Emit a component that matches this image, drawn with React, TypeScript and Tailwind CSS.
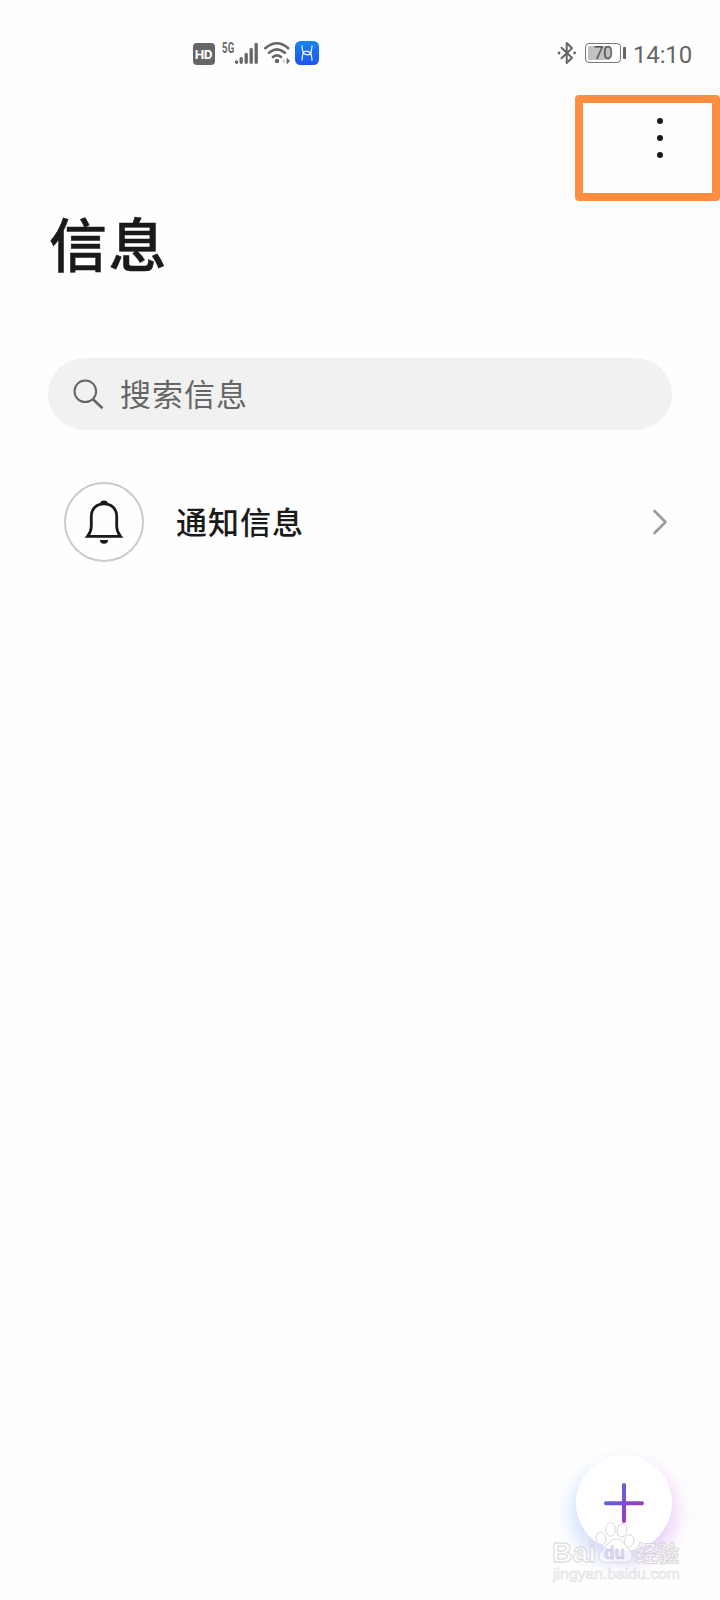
import React from 'react';

const StatusBar: React.FC = () => (
  <header className="h-[94px] flex justify-between pl-[192px] pr-7 pt-[40px] text-[#666]">
    <div className="flex h-[26px]">
      <div className="w-[22px] h-[22px] mt-[2.5px] ml-[0.5px] rounded-[4px] bg-[#666] text-white text-[13.5px] leading-[22px] tracking-[-0.3px] font-bold text-center font-['Roboto','Liberation_Sans',sans-serif]">
        HD
      </div>
      <span className="ml-[7.5px] w-[12.5px] text-[14px] leading-[16px] tracking-[0.5px] font-bold origin-left scale-x-[0.68] whitespace-nowrap font-['Roboto','Liberation_Sans',sans-serif]">
        5G
      </span>
      <svg className="w-[24px] h-[26px]" viewBox="0 0 24 26" stroke="currentColor" strokeWidth="3.3" strokeLinecap="round">
        <path d="M1.6 21.8v.5M6.2 18.7v3.6M11.2 14.5v7.8M16.2 9.5v12.8M21.2 4.3v18" />
      </svg>
      <svg className="ml-[4px] w-[29px] h-[26px]" viewBox="0 0 29 26" fill="none" stroke="currentColor" strokeWidth="2.6" strokeLinecap="round">
        <path d="M2.3 8.2Q14 -1.7 25.2 8.2M6 12.7Q14 6 21.8 12.7M10 17Q14 13.7 18 17" />
        <circle cx="14" cy="21" r="2.2" fill="currentColor" stroke="none" />
        <path d="M21.8 18.5v5L19 21z" fill="#ccc" stroke="none" />
        <path d="M23.6 17.5v7L27 21z" fill="currentColor" stroke="none" />
      </svg>
      <svg className="ml-[3px] mt-[1px] w-[24px] h-[24px]" viewBox="0 0 24 24" fill="none">
        <defs>
          <linearGradient id="app" x1="0" y1="0" x2="0" y2="1">
            <stop stopColor="#1687ef" />
            <stop offset="1" stopColor="#2051ee" />
          </linearGradient>
        </defs>
        <rect width="24" height="24" rx="5.5" fill="url(#app)" />
        <path
          d="M7 4.8C7 8.5 8 9.6 8 12S7 15.5 7 19.2M17 4.8c0 3.7-1 4.8-1 7.2s1 3.5 1 7.2M7.6 9.5c.5 5 7.5 5.6 8.6 2M16.4 14.5c-.6-5-7.6-5.4-8.6-2"
          stroke="#fff"
          strokeWidth="1.1"
          strokeLinecap="round"
        />
      </svg>
    </div>

    <div className="flex h-[26px]">
      <svg className="w-[20px] h-[26px]" viewBox="0 0 20 26" fill="none" stroke="currentColor" strokeWidth="2" strokeLinejoin="round" strokeLinecap="round">
        <path d="M4.5 7.8l10.5 10L9.7 23V3l5.3 5.2-10.5 10" />
        <circle cx="2" cy="13" r="1.4" fill="currentColor" stroke="none" />
        <circle cx="17.6" cy="13" r="1.4" fill="currentColor" stroke="none" />
      </svg>
      <div className="relative ml-[8px] mt-[3px] w-[36px] h-[20px] rounded-[4px] border border-[#777] p-[2px]">
        <div className="h-full w-[22px] rounded-[1px] bg-[#c2c2c2]" />
        <span className="absolute inset-0 text-center text-[17.5px] leading-[19px] tracking-[-0.5px] text-[#555] font-['Roboto','Liberation_Sans',sans-serif]">70</span>
      </div>
      <div className="ml-[2px] mt-[7px] w-[3px] h-[12px] rounded-[1px] bg-[#666]" />
      <span className="ml-[7px] pt-px text-[24px] leading-[28px] tracking-[-0.15px] font-['Roboto','Liberation_Sans',sans-serif]">14:10</span>
    </div>
  </header>
);

const Watermark: React.FC = () => (
  <svg className="absolute left-[545px] top-[1515px] w-[145px] h-[75px]" viewBox="0 0 145 75" fill="#fff" fillOpacity="0.6" stroke="#d6d4d6" strokeWidth="0.9">
    <text x="7" y="46.5" fontSize="28" fontWeight="bold" textLength="44" lengthAdjust="spacingAndGlyphs" fontFamily="Liberation Sans, sans-serif">Bai</text>
    <ellipse cx="56" cy="23.5" rx="4.8" ry="6.5" transform="rotate(-12 56 23.5)" />
    <ellipse cx="65.5" cy="14.5" rx="4.8" ry="6.8" />
    <ellipse cx="77" cy="15.5" rx="4.8" ry="6.8" transform="rotate(8 77 15.5)" />
    <ellipse cx="84" cy="26" rx="4.8" ry="6.3" transform="rotate(15 84 26)" />
    <path d="M71 24c6 0 8 5 12 9 8 7 3 14.5-3.5 14.5-3 0-5.5-.7-8.5-.7s-5.5.7-9.5.7C54.5 47.5 51 41 58 34c4-3.5 7-10 13-10z" />
    <text x="59" y="43.5" fontSize="19" fontWeight="bold" textLength="21" lengthAdjust="spacingAndGlyphs" fill="#cdc8e8" stroke="#bdb8dc" strokeWidth="0.4" fontFamily="Liberation Sans, sans-serif">du</text>
    <text x="90.5" y="46" fontSize="22" fontWeight="bold" textLength="43.5" fontFamily="Noto Sans CJK SC, sans-serif">经验</text>
    <text x="8" y="63.5" fontSize="15" textLength="127" lengthAdjust="spacingAndGlyphs" stroke="#e2e0e2" strokeWidth="0.7" fontFamily="Liberation Sans, sans-serif">jingyan.baidu.com</text>
  </svg>
);

export default function App() {
  return (
    <div className="relative w-[720px] h-[1600px] overflow-hidden bg-[#fefefe] text-[#1a1a1a] font-['Noto_Sans_CJK_SC',sans-serif]">
      <StatusBar />

      <div className="h-[103px] flex justify-end pr-[57px] pt-[24px]">
        <button className="w-[6px] h-[40px] flex flex-col gap-[11px]" aria-label="更多">
          <span className="size-[6px] shrink-0 rounded-full bg-[#1a1a1a]" />
          <span className="size-[6px] shrink-0 rounded-full bg-[#1a1a1a]" />
          <span className="size-[6px] shrink-0 rounded-full bg-[#1a1a1a]" />
        </button>
      </div>
      {/* highlight around the menu button */}
      <div className="absolute left-[575px] top-[95px] w-[145px] h-[105.5px] rounded-[4px] border-8 border-[#ff8d3d]" />

      <main className="px-12">
        <h1 className="h-[90px] pl-px text-[58px] leading-[90px] tracking-[1.5px] font-medium [-webkit-text-stroke:0.5px_#1a1a1a]">信息</h1>

        <div className="mt-[71px] h-[72px] rounded-full bg-[#f1f1f1] flex items-center pl-6 text-[#666]">
          <svg className="w-[32px] h-[32px]" viewBox="0 0 32 32" fill="none" stroke="currentColor" strokeWidth="2">
            <circle cx="13.3" cy="13.3" r="10.8" />
            <path d="M21 21.3l9.500 9" strokeWidth="2.6" />
          </svg>
          <span className="relative top-[-1px] ml-4 text-[31px] leading-[46px] tracking-[1px]">搜索信息</span>
        </div>

        <div className="mt-[52px] h-20 flex items-center pl-4 pr-[4px]">
          <div className="size-20 rounded-full border-2 border-[#cbcbcb] flex items-center justify-center">
            <svg className="w-[40px] h-[46px]" viewBox="0 0 40 46" fill="none" stroke="currentColor" strokeWidth="2.8">
              <path d="M3.5 37.3Q7.3 32.5 7.3 27.5V17.5C7.3 9.5 12.5 4.8 20 4.8s12.7 4.7 12.7 12.7V27.500q0 5 3.8 9.8z" />
              <path d="M15.8 5a4.300 4.300 0 0 1 8.400 0zM16 41h8a4 3.800 0 0 1-8 0z" fill="currentColor" stroke="none" />
            </svg>
          </div>
          <span className="relative top-[-1px] ml-8 text-[31px] leading-[46px] tracking-[1px] font-medium">通知信息</span>
          <svg className="ml-auto w-[16px] h-[28px]" viewBox="0 0 16 28" fill="none" stroke="#9a9a9a" strokeWidth="2.6" strokeLinecap="round" strokeLinejoin="round">
            <path d="M2.5 3l11 11-11 11" />
          </svg>
        </div>
      </main>

      <button
        aria-label="新建"
        className="absolute left-[576px] top-[1455px] size-24 rounded-full bg-white flex items-center justify-center shadow-[-8px_10px_18px_rgba(130,205,255,0.26),8px_9px_18px_rgba(240,130,235,0.24),0_12px_18px_rgba(165,125,255,0.1)]"
      >
        <svg className="size-[42px]" viewBox="0 0 42 42" fill="none" stroke="url(#plus)" strokeWidth="4" strokeLinecap="round">
          <defs>
            <linearGradient id="plus" gradientUnits="userSpaceOnUse" x1="8" y1="8" x2="30" y2="30">
              <stop stopColor="#4d72d6" />
              <stop offset="0.5" stopColor="#7a4fe0" />
              <stop offset="1" stopColor="#9a3cc0" />
            </linearGradient>
          </defs>
          <path d="M21 3v36M3 21.3h36" />
        </svg>
      </button>

      <Watermark />
    </div>
  );
}
